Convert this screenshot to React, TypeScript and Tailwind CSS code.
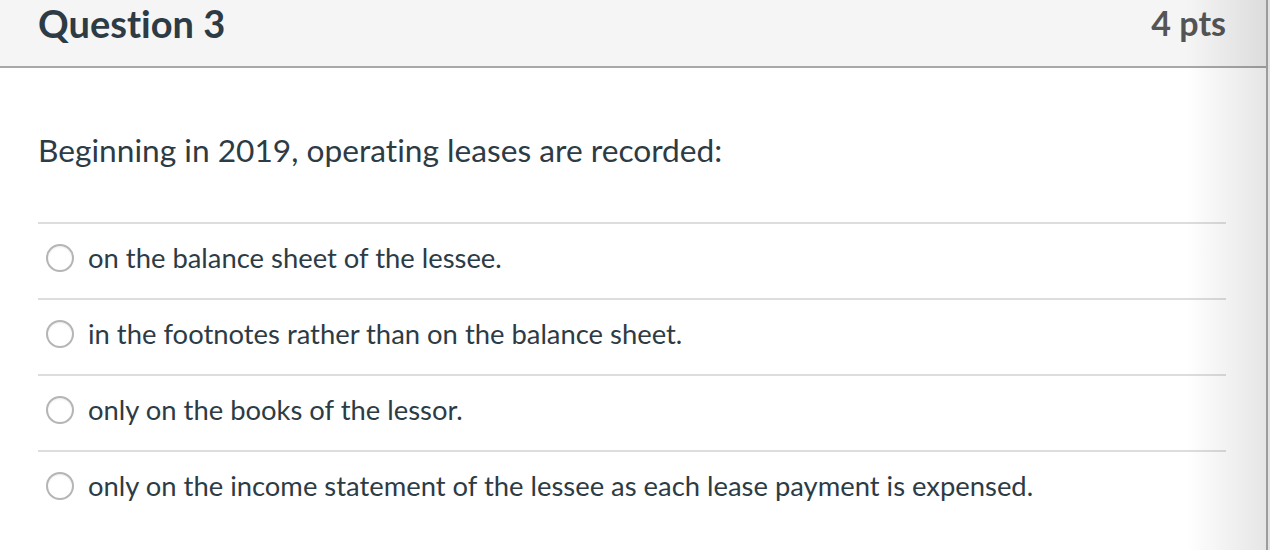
const answers = [
  'on the balance sheet of the lessee.',
  'in the footnotes rather than on the balance sheet.',
  'only on the books of the lessor.',
  'only on the income statement of the lessee as each lease payment is expensed.',
]

function Radio() {
  return (
    <span className="w-[28px] h-[28px] rounded-full border-2 border-[#b5b5b5] bg-white shrink-0 shadow-[inset_0_1px_2px_rgba(0,0,0,0.08)]" />
  )
}

export default function App() {
  return (
    <div className="flex h-[550px] w-[1270px] bg-white font-['Lato',sans-serif] [font-variant-ligatures:none] overflow-hidden">
      <div className="relative flex-1 border-r-2 border-[#9c9c9c]">
        <div className="h-[68px] bg-[#f5f5f5] border-b-2 border-[#a8a8a8] flex items-start justify-between pt-[6px] pl-[38px] pr-[40px]">
          <h2 className="text-[38px] font-bold text-[#2d3b45] leading-[34px]">Question 3</h2>
          <span className="text-[34px] font-bold text-[#555555] leading-[34px]">4 pts</span>
        </div>
        <div className="pl-[38px] pr-[40px]">
          <p className="pt-[63px] pb-[53px] text-[31.7px] text-[#2d3b45] leading-[38px]">
            Beginning in 2019, operating leases are recorded:
          </p>
          <div>
            {answers.map((a) => (
              <div key={a} className="flex items-center gap-[14px] h-[76px] border-t-2 border-[#dddddd] pl-[8px] pb-[6px]">
                <Radio />
                <span className="text-[27.4px] text-[#2d3b45] leading-[32px]">{a}</span>
              </div>
            ))}
          </div>
        </div>
        <div className="pointer-events-none absolute top-0 right-0 h-full w-[80px] bg-gradient-to-r from-transparent to-black/10" />
      </div>
      <div className="w-[2px] bg-[#e2e2e2]" />
    </div>
  )
}
